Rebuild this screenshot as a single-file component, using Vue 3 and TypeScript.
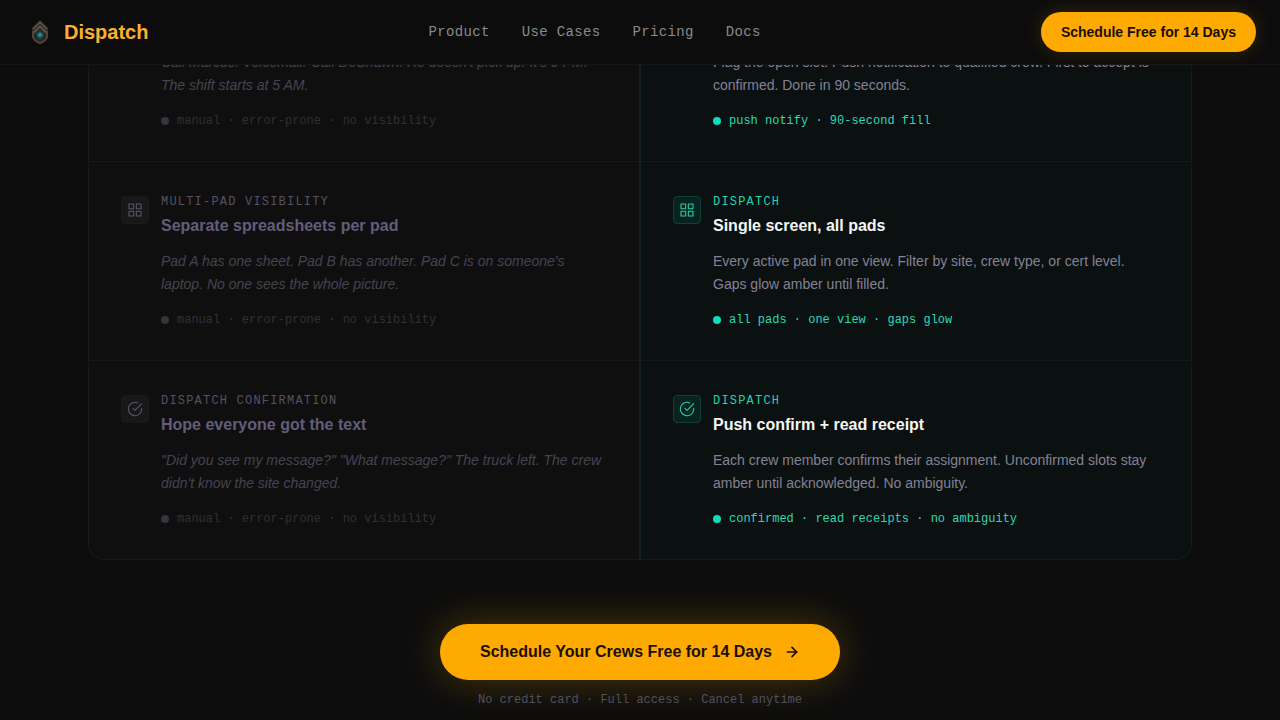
<script setup lang="ts">
interface Entry {
  icon?: 'grid' | 'check'
  label?: string
  title?: string
  body: string
  meta: string
}

interface Column {
  kind: 'before' | 'after'
  entries: Entry[]
}

const links: string[] = ['Product', 'Use Cases', 'Pricing', 'Docs']

const columns: Column[] = [
  {
    kind: 'before',
    entries: [
      {
        body: "Call Marcus. Voicemail. Call DeShawn. He doesn't pick up. It's 9 PM. The shift starts at 5 AM.",
        meta: 'manual · error-prone · no visibility',
      },
      {
        icon: 'grid',
        label: 'MULTI-PAD VISIBILITY',
        title: 'Separate spreadsheets per pad',
        body: "Pad A has one sheet. Pad B has another. Pad C is on someone's laptop. No one sees the whole picture.",
        meta: 'manual · error-prone · no visibility',
      },
      {
        icon: 'check',
        label: 'DISPATCH CONFIRMATION',
        title: 'Hope everyone got the text',
        body: '"Did you see my message?" "What message?" The truck left. The crew didn\'t know the site changed.',
        meta: 'manual · error-prone · no visibility',
      },
    ],
  },
  {
    kind: 'after',
    entries: [
      {
        body: 'Flag the open slot. Push notification to qualified crew. First to accept is confirmed. Done in 90 seconds.',
        meta: 'push notify · 90-second fill',
      },
      {
        icon: 'grid',
        label: 'DISPATCH',
        title: 'Single screen, all pads',
        body: 'Every active pad in one view. Filter by site, crew type, or cert level. Gaps glow amber until filled.',
        meta: 'all pads · one view · gaps glow',
      },
      {
        icon: 'check',
        label: 'DISPATCH',
        title: 'Push confirm + read receipt',
        body: 'Each crew member confirms their assignment. Unconfirmed slots stay amber until acknowledged. No ambiguity.',
        meta: 'confirmed · read receipts · no ambiguity',
      },
    ],
  },
]
</script>

<template>
  <div class="page">
    <header class="bar">
      <a class="brand" href="#">
        <svg class="brand-mark" viewBox="0 0 32 32" aria-hidden="true">
          <path d="M16 4.500 24 11.500v9.500l-3 4-5 3.500-5-3.500-3-4v-9.500z" fill="#29251f" />
          <path d="M9 13.500 16 6l7 7.500" fill="none" stroke="#554e43" stroke-width="2.200" />
          <path d="M9 17.500 16 10.500l7 7" fill="none" stroke="#6b5e4c" stroke-width="1.600" />
          <path d="M9 15v6c1 3 4 5 7 6 3-1 6-3 7-6v-6" fill="none" stroke="#51463a" stroke-width="2" />
          <path d="m16 13 4.500 5-1.500 4-3 2-3-2-1.500-4z" fill="#173f43" />
          <circle cx="16" cy="19" r="2.500" fill="#24777b" />
          <circle cx="16" cy="18.500" r="1" fill="#3f9496" />
        </svg>
        <span>Dispatch</span>
      </a>
      <nav class="links" aria-label="Main">
        <a v-for="link in links" :key="link" href="#">{{ link }}</a>
      </nav>
      <button class="pill pill-small" type="button">Schedule Free for 14 Days</button>
    </header>

    <main class="content">
      <section class="board">
        <div v-for="column in columns" :key="column.kind" class="column" :class="column.kind">
          <article v-for="entry in column.entries" :key="entry.body" class="entry" :class="{ plain: !entry.icon }">
            <div v-if="entry.icon" class="tile">
              <svg viewBox="0 0 24 24" aria-hidden="true">
                <template v-if="entry.icon === 'grid'">
                  <rect x="3" y="3" width="7" height="7" />
                  <rect x="14" y="3" width="7" height="7" />
                  <rect x="14" y="14" width="7" height="7" />
                  <rect x="3" y="14" width="7" height="7" />
                </template>
                <template v-else>
                  <path d="M22 11.080V12a10 10 0 1 1-5.930-9.140" />
                  <path d="M22 4 12 14.010l-3-3" />
                </template>
              </svg>
            </div>
            <div class="copy">
              <p v-if="entry.label" class="label">{{ entry.label }}</p>
              <h3 v-if="entry.title" class="title">{{ entry.title }}</h3>
              <p class="body">{{ entry.body }}</p>
              <p class="meta"><span class="dot"></span>{{ entry.meta }}</p>
            </div>
          </article>
        </div>
      </section>

      <section class="cta">
        <button class="pill pill-large" type="button">
          <span>Schedule Your Crews Free for 14 Days</span>
          <svg viewBox="0 0 24 24" aria-hidden="true">
            <path d="M5 12h14" />
            <path d="m12 5 7 7-7 7" />
          </svg>
        </button>
        <p class="note">No credit card · Full access · Cancel anytime</p>
      </section>
    </main>
  </div>
</template>

<style>
body {
  background: #0d0d0d;
}
</style>

<style scoped>
.page {
  min-height: 100vh;
  background: #0d0d0d;
  font-family: "Liberation Sans", Arial, sans-serif;
}

.bar {
  position: sticky;
  top: 0;
  z-index: 10;
  display: flex;
  align-items: center;
  justify-content: space-between;
  height: 64px;
  padding: 0 24px;
  background: #0c0c0c;
  border-bottom: 1px solid #151616;
}

.brand {
  display: flex;
  align-items: center;
  gap: 8px;
  color: #fbb12f;
  font-size: 20px;
  font-weight: 700;
  line-height: 28px;
  text-decoration: none;
}

.brand-mark {
  width: 32px;
  height: 32px;
}

.links {
  display: flex;
  gap: 32px;
}

.links a {
  color: #8a898e;
  font-family: "Liberation Mono", monospace;
  font-size: 14px;
  line-height: 20px;
  letter-spacing: 0.025em;
  text-decoration: none;
}

.pill {
  display: flex;
  align-items: center;
  border: 0;
  border-radius: 999px;
  background: #ffaa00;
  color: #1a0e05;
  font-family: inherit;
  font-weight: 700;
  cursor: pointer;
}

.pill-small {
  height: 40px;
  padding: 0 20px;
  font-size: 14px;
  box-shadow: 0 0 20px rgba(255, 170, 0, 0.18);
}

.pill-large {
  gap: 12px;
  height: 56px;
  padding: 0 40px;
  font-size: 16px;
  box-shadow: 0 0 40px rgba(255, 170, 0, 0.28);
}

.pill-large svg {
  width: 16px;
  height: 16px;
  fill: none;
  stroke: currentColor;
  stroke-width: 2.5;
  stroke-linecap: round;
  stroke-linejoin: round;
}

.content {
  max-width: 1104px;
  margin: 0 auto;
}

.board {
  display: grid;
  grid-template-columns: 1fr 1fr;
  gap: 2px;
  margin-top: -14px;
  overflow: hidden;
  background: #10211e;
  border: 1px solid #171a1a;
  border-top: 0;
  border-radius: 0 0 16px 16px;
}

.column {
  min-width: 0;
}

.before {
  background: #0f0f0f;
}

.after {
  background: #0b1010;
}

.entry {
  display: flex;
  gap: 12px;
  padding: 32px;
  border-bottom: 1px solid #161717;
}

.after .entry {
  border-bottom-color: #131a1a;
}

.entry:last-child {
  border-bottom: 0;
}

.plain {
  padding-top: 0;
  padding-left: 72px;
}

.tile {
  display: flex;
  flex: none;
  align-items: center;
  justify-content: center;
  box-sizing: border-box;
  width: 28px;
  height: 28px;
  margin-top: 2px;
  border: 1px solid #19191a;
  border-radius: 4px;
  background: #18181a;
  color: #5a5768;
}

.after .tile {
  border-color: #0d4138;
  background: #09231f;
  color: #2ad0ae;
}

.tile svg {
  width: 16px;
  height: 16px;
  fill: none;
  stroke: currentColor;
  stroke-width: 1.6;
  stroke-linecap: round;
  stroke-linejoin: round;
}

.copy {
  min-width: 0;
}

.label,
.title,
.body,
.meta,
.note {
  margin: 0;
}

.label {
  margin-bottom: 4px;
  color: #555263;
  font-family: "Liberation Mono", monospace;
  font-size: 12px;
  line-height: 16px;
  letter-spacing: 0.1em;
}

.title {
  margin-bottom: 12px;
  color: #625d7a;
  font-size: 16px;
  font-weight: 700;
  line-height: 24px;
}

.body {
  color: #464351;
  font-size: 14px;
  font-style: italic;
  line-height: 23px;
}

.meta {
  display: flex;
  align-items: center;
  gap: 8px;
  margin-top: 16px;
  color: #302f37;
  font-family: "Liberation Mono", monospace;
  font-size: 12px;
  line-height: 16px;
}

.dot {
  flex: none;
  width: 8px;
  height: 8px;
  border-radius: 50%;
  background: #35343f;
}

.after .label {
  color: #22d3b0;
}

.after .title {
  color: #f5f5f5;
}

.after .body {
  color: #848295;
  font-style: normal;
}

.after .meta {
  color: #28dab6;
}

.after .dot {
  background: #0fdcbd;
}

.cta {
  display: flex;
  flex-direction: column;
  align-items: center;
  gap: 12px;
  padding-top: 64px;
}

.note {
  color: #53505e;
  font-family: "Liberation Mono", monospace;
  font-size: 12px;
  line-height: 16px;
}
</style>
